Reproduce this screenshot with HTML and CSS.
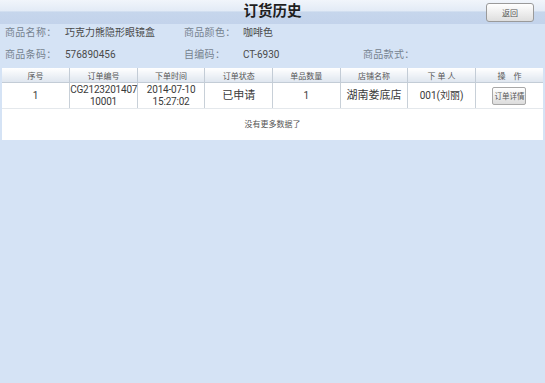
FILE: index.html
```html
<!DOCTYPE html>
<html lang="zh">
<head>
    <meta charset="UTF-8">
    <title>订货历史</title>
    <link rel="stylesheet" href="styles.css">
</head>
<body>
    <div class="topbar">
        <h1 class="title">订货历史</h1>
        <button class="back-btn">返回</button>
    </div>

    <!-- 商品信息 -->
    <div class="info">
        <span class="label">商品名称：</span>
        <span class="value">巧克力熊隐形眼镜盒</span>
        <span class="label">商品颜色：</span>
        <span class="value">咖啡色</span>
        <span></span>

        <span class="label">商品条码：</span>
        <span class="value">576890456</span>
        <span class="label">自编码：</span>
        <span class="value">CT-6930</span>
        <span class="label">商品款式：</span>
    </div>

    <!-- 订单列表 -->
    <div class="list">
        <table class="orders">
            <thead>
                <tr>
                    <th>序号</th>
                    <th>订单编号</th>
                    <th>下单时间</th>
                    <th>订单状态</th>
                    <th>单品数量</th>
                    <th>店铺名称</th>
                    <th>下 单 人</th>
                    <th>操　作</th>
                </tr>
            </thead>
            <tbody>
                <tr>
                    <td>1</td>
                    <td class="two-line">CG2123201407<br>10001</td>
                    <td class="two-line">2014-07-10<br>15:27:02</td>
                    <td class="big">已申请</td>
                    <td>1</td>
                    <td class="big">湖南娄底店</td>
                    <td>001(刘丽)</td>
                    <td><button class="detail-btn">订单详情</button></td>
                </tr>
            </tbody>
        </table>
        <div class="no-more">没有更多数据了</div>
    </div>
</body>
</html>
```

FILE: styles.css
```css
body {
    margin: 0;
    background-color: #d5e3f5;
    font-family: Roboto, "Noto Sans CJK SC", sans-serif;
    color: #333;
}
.topbar {
    height: 24px;
    position: relative;
    display: flex;
    align-items: center;
    justify-content: center;
    background: linear-gradient(to bottom, #f1f5fb 0%, #e3ebf6 45%, #c6d6ec 50%, #c3d3eb 100%);
}
.title {
    margin: 0;
    font-size: 14.5px;
    font-weight: bold;
    color: #1e1e1e;
    line-height: 24px;
}
.back-btn {
    position: absolute;
    right: 11px;
    top: 3px;
    width: 48px;
    height: 19px;
    padding: 0;
    font-family: inherit;
    font-size: 8px;
    color: #555;
    border: 1px solid #9a9a9a;
    border-radius: 3px;
    background: linear-gradient(to bottom, #ffffff, #dedede);
}
.info {
    display: grid;
    grid-template-columns: 60px 119px 59px 120px auto;
    grid-auto-rows: 18px;
    row-gap: 4px;
    padding-left: 5px;
    font-size: 10px;
    line-height: 18px;
}
.label {
    color: #76828f;
    letter-spacing: 0.3px;
}
.value {
    color: #4a4a4a;
}
.list {
    margin: 4px 2px 0;
    background: #fff;
}
.orders {
    width: 100%;
    border-collapse: collapse;
    table-layout: fixed;
}
.orders th {
    height: 14px;
    padding: 0;
    font-size: 8px;
    font-weight: normal;
    color: #555;
    background: linear-gradient(to bottom, #ffffff, #dfe6ef);
    border-left: 1px solid #c3ccd6;
    border-bottom: 1px solid #c3ccd6;
}
.orders td {
    height: 25px;
    padding: 0;
    text-align: center;
    font-size: 10px;
    line-height: 12px;
    color: #3a3a3a;
    border-left: 1px solid #c8d0d8;
    border-bottom: 1px solid #e4e8ec;
}
.orders td.big {
    font-size: 11px;
}
.orders th:first-child,
.orders td:first-child {
    border-left: none;
}
.two-line {
    white-space: nowrap;
    letter-spacing: -0.2px;
}
.detail-btn {
    width: 34px;
    height: 18px;
    padding: 0;
    font-family: inherit;
    font-size: 7.5px;
    color: #555;
    border: 1px solid #a8a8a8;
    border-radius: 2px;
    background: linear-gradient(to bottom, #ffffff, #dcdcdc);
}
.no-more {
    height: 31px;
    line-height: 31px;
    text-align: center;
    font-size: 8px;
    color: #555;
}
```
